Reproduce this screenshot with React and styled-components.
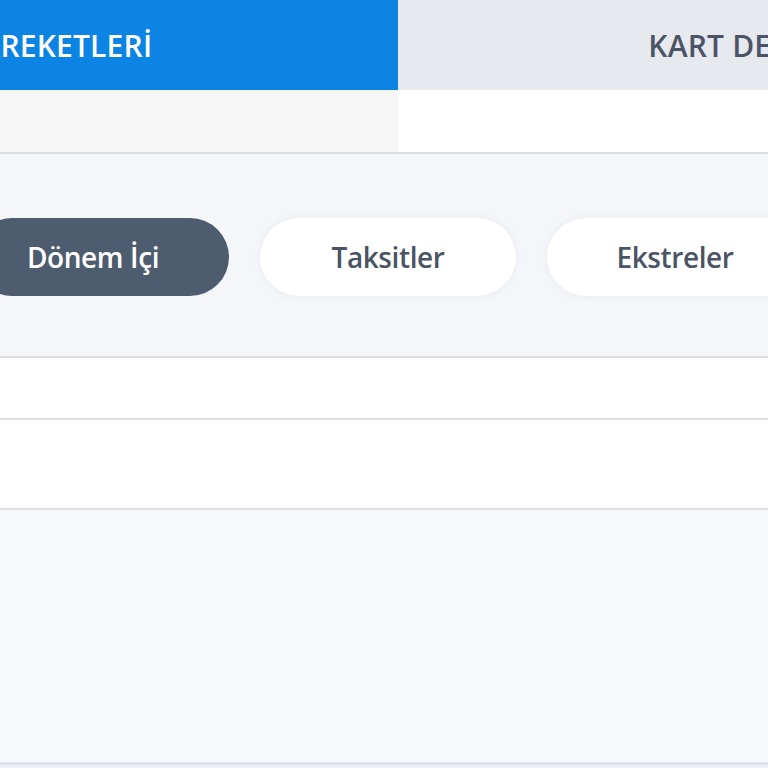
import React, { useState } from 'react';
import styled, { createGlobalStyle } from 'styled-components';

const GlobalStyle = createGlobalStyle`
  html, body {
    margin: 0;
    padding: 0;
    overflow: hidden;
    background: #eceef3;
  }
  body {
    font-family: "Open Sans", "Noto Sans", sans-serif;
  }
`;

const Page = styled.div`
  width: 1488px;
  margin-left: -346px;
`;

const TabBar = styled.div`
  display: grid;
  grid-template-columns: 1fr 1fr;
  height: 90px;
`;

const Tab = styled.div`
  display: flex;
  align-items: center;
  justify-content: center;
  padding-right: ${props => (props.active ? 26 : 0)}px;
  background: ${props => (props.active ? '#0c84e4' : '#e6e9ee')};
  color: ${props => (props.active ? '#ffffff' : '#4a5466')};
  font-size: 30px;
  font-weight: 600;
  letter-spacing: 0.2px;
  cursor: pointer;
`;

const TabShade = styled.div`
  display: grid;
  grid-template-columns: 1fr 1fr;
  height: 62px;
  border-bottom: 2px solid #dcdde0;
`;

const ShadeHalf = styled.div`
  background: ${props => (props.tinted ? '#f6f6f6' : '#ffffff')};
`;

const FilterSection = styled.div`
  background: #f5f6fa;
  padding: 64px 0 60px 319px;
  border-bottom: 2px solid #dddee1;
`;

const PillRow = styled.div`
  display: flex;
  gap: 31px;
`;

const Pill = styled.button`
  width: 256px;
  height: 78px;
  padding: 0 ${props => (props.selected ? 16 : 0)}px 0 0;
  border: none;
  border-radius: 39px;
  background: ${props => (props.selected ? '#4d5c6e' : '#ffffff')};
  color: ${props => (props.selected ? '#ffffff' : '#4b5464')};
  font-family: "Open Sans", sans-serif;
  font-size: 28px;
  font-weight: 600;
  letter-spacing: -0.4px;
  box-shadow: ${props => (props.selected ? 'none' : '0 0 6px rgba(220, 224, 232, 0.6)')};
  cursor: pointer;
`;

const ListRow = styled.div`
  height: ${props => props.h}px;
  background: #ffffff;
  border-bottom: 2px solid #dddee1;
`;

const EmptyArea = styled.div`
  height: 252px;
  background: #f7f8fb;
  border-bottom: 3px solid #dfe2e8;
`;

const filters = ['Dönem İçi', 'Taksitler', 'Ekstreler'];

function App () {
  const [tab, setTab] = useState(0);
  const [filter, setFilter] = useState(0);

  return (
    <Page>
      <GlobalStyle />
      <TabBar>
        <Tab active={tab === 0} onClick={() => setTab(0)}>KART HAREKETLERİ</Tab>
        <Tab active={tab === 1} onClick={() => setTab(1)}>KART DETAYLARI</Tab>
      </TabBar>
      <TabShade>
        <ShadeHalf tinted />
        <ShadeHalf />
      </TabShade>
      <FilterSection>
        <PillRow>
          {filters.map((name, i) => (
            <Pill key={name} selected={filter === i} onClick={() => setFilter(i)}>
              {name}
            </Pill>
          ))}
        </PillRow>
      </FilterSection>
      <ListRow h={60} />
      <ListRow h={88} />
      <EmptyArea />
    </Page>
  );
}

export default App;
